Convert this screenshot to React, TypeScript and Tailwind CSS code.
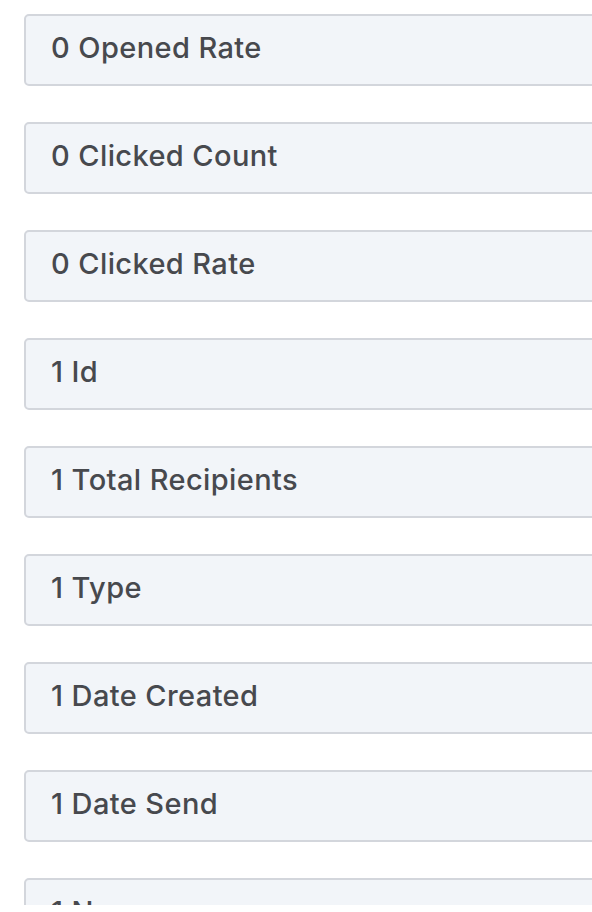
import React from "react";

const items = [
  "0 Opened Rate",
  "0 Clicked Count",
  "0 Clicked Rate",
  "1 Id",
  "1 Total Recipients",
  "1 Type",
  "1 Date Created",
  "1 Date Send",
  "1 Name",
];

export default function App() {
  return (
    <div className="w-[592px] h-[905px] overflow-hidden bg-white">
      <div className="flex flex-col gap-[36px] pl-[24px] pt-[14px]">
        {items.map((t) => (
          <div
            key={t}
            className="w-[640px] h-[72px] shrink-0 rounded-[5px] border-2 border-[#d3d6dc] bg-[#f2f5f9] flex items-center pl-[25px] pb-[6px]"
          >
            <span
              className="text-[29px] font-medium text-[#47494e] leading-none tracking-[0.4px]"
              style={{ fontFamily: "Inter, 'Open Sans', sans-serif" }}
            >
              {t}
            </span>
          </div>
        ))}
      </div>
    </div>
  );
}
